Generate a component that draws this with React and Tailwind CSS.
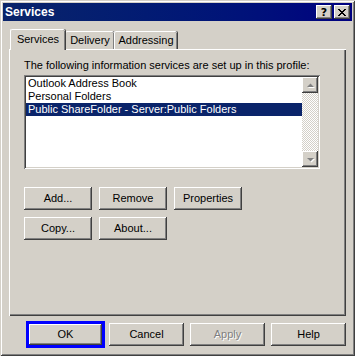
const RAISED =
  'shadow-[inset_-1px_-1px_#404040,inset_1px_1px_#ffffff,inset_-2px_-2px_#808080,inset_2px_2px_#d4d0c8]';
const SUNKEN =
  'shadow-[inset_1px_1px_#808080,inset_-1px_-1px_#ffffff,inset_2px_2px_#404040,inset_-2px_-2px_#d4d0c8]';

function Button({ children, className = '', disabled = false }) {
  return (
    <div
      className={`flex items-center justify-center bg-[#d4d0c8] ${RAISED} ${className} ${
        disabled ? 'text-[#808080] [text-shadow:1px_1px_0_#ffffff]' : 'text-black'
      }`}
    >
      {children}
    </div>
  );
}

function Arrow({ down = false }) {
  return (
    <div className={`w-[16px] h-[16px] flex items-center justify-center bg-[#d4d0c8] ${RAISED}`}>
      <svg width="9" height="6" viewBox="0 0 9 6" className="mt-[1px]">
        {down ? (
          <>
            <polygon points="2,2 9,2 5.5,5.5" fill="#ffffff" />
            <polygon points="1,1 8,1 4.5,4.5" fill="#808080" />
          </>
        ) : (
          <>
            <polygon points="5.5,1.5 9,5 2,5" fill="#ffffff" />
            <polygon points="4.5,0.5 8,4 1,4" fill="#808080" />
          </>
        )}
      </svg>
    </div>
  );
}

function Tab({ label, active, className = '' }) {
  return (
    <div
      className={`flex items-center justify-center bg-[#d4d0c8] rounded-t-[2px] border-l border-t border-white shadow-[inset_-1px_0_#808080,1px_0_#404040] ${
        active ? 'h-[21px] -mb-[1px] relative z-10 pb-[2px]' : 'h-[18px]'
      } ${className}`}
    >
      {label}
    </div>
  );
}

const ITEMS = [
  { name: 'Outlook Address Book' },
  { name: 'Personal Folders' },
  { name: 'Public ShareFolder - Server:Public Folders', selected: true },
];

export default function App() {
  return (
    <div className="w-[355px] h-[356px] bg-[#d4d0c8] p-[3px] flex flex-col shadow-[inset_1px_1px_#d4d0c8,inset_-1px_-1px_#404040,inset_2px_2px_#ffffff,inset_-2px_-2px_#808080] font-['Liberation_Sans',sans-serif] text-[11px] text-black select-none">
      {/* Title bar */}
      <div className="h-[18px] flex items-center justify-between bg-linear-to-r from-[#0a246a] to-[#000080] pl-[2px] pr-[2px]">
        <span className="text-white font-bold text-[12px]">Services</span>
        <div className="flex items-center gap-[2px]">
          <div className={`w-[16px] h-[14px] flex items-center justify-center bg-[#d4d0c8] ${RAISED} font-bold text-[11px] font-['DejaVu_Sans',sans-serif] leading-none`}>
            ?
          </div>
          <div className={`w-[16px] h-[14px] flex items-center justify-center bg-[#d4d0c8] ${RAISED}`}>
            <svg width="8" height="7" viewBox="0 0 8 7">
              <path d="M0 0h2v1H0zM6 0h2v1H6zM1 1h2v1H1zM5 1h2v1H5zM2 2h4v1H2zM3 3h2v1H3zM2 4h4v1H2zM1 5h2v1H1zM5 5h2v1H5zM0 6h2v1H0zM6 6h2v1H6z" fill="#000" />
            </svg>
          </div>
        </div>
      </div>

      {/* Body */}
      <div className="flex-1 flex flex-col px-[6px] pt-[8px]">
        {/* Tabs */}
        <div className="h-[20px] flex items-end pl-[1px]">
          <Tab label="Services" active className="w-[55px]" />
          <Tab label="Delivery" className="w-[49px]" />
          <Tab label="Addressing" className="w-[63px]" />
        </div>

        {/* Panel */}
        <div className="h-[267px] flex flex-col pl-[15px] pt-[10px] shadow-[inset_1px_1px_#ffffff,inset_-1px_-1px_#404040,inset_-2px_-2px_#808080]">
          <div className="h-[13px] leading-[13px]">The following information services are set up in this profile:</div>

          <div className={`mt-[3px] w-[296px] h-[94px] bg-white p-[2px] flex ${SUNKEN}`}>
            <div className="flex-1 flex flex-col">
              {ITEMS.map((item) => (
                <div
                  key={item.name}
                  className={`h-[13px] leading-[13px] pl-[2px] whitespace-nowrap ${
                    item.selected ? 'bg-[#0a246a] text-white' : ''
                  }`}
                >
                  {item.name}
                </div>
              ))}
            </div>
            <div className="w-[16px] flex flex-col bg-[repeating-conic-gradient(#d4d0c8_0%_25%,#ffffff_0%_50%)] bg-[length:2px_2px]">
              <Arrow />
              <div className="flex-1" />
              <Arrow down />
            </div>
          </div>

          <div className="mt-[18px] flex gap-[7px]">
            <Button className="w-[68px] h-[23px]">Add...</Button>
            <Button className="w-[68px] h-[23px]">Remove</Button>
            <Button className="w-[68px] h-[23px]">Properties</Button>
          </div>
          <div className="mt-[7px] flex gap-[7px]">
            <Button className="w-[68px] h-[23px]">Copy...</Button>
            <Button className="w-[68px] h-[23px]">About...</Button>
          </div>
        </div>

        {/* Dialog buttons */}
        <div className="mt-[5px] flex items-center justify-end">
          <div className="w-[79px] h-[27px] border-[3px] border-[#0000ff]">
            <Button className="w-full h-full">OK</Button>
          </div>
          <Button className="ml-[4px] w-[75px] h-[23px]">Cancel</Button>
          <Button className="ml-[6px] w-[75px] h-[23px]" disabled>
            Apply
          </Button>
          <Button className="ml-[6px] w-[75px] h-[23px]">Help</Button>
        </div>
      </div>
    </div>
  );
}
